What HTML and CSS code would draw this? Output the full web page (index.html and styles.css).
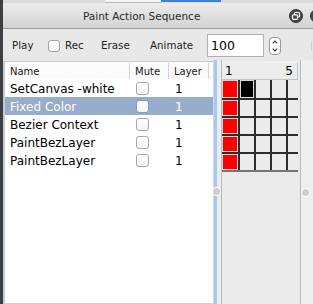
FILE: index.html
```html
<!DOCTYPE html>
<html>
<head>
<meta charset="utf-8">
<link rel="stylesheet" href="styles.css">
</head>
<body>
<div class="window">
  <div class="edge"></div>
  <div class="main">
    <div class="topstrip"><span class="ts-a"></span><span class="ts-b"></span><span class="ts-c"></span><span class="ts-d"></span></div>
    <div class="titlebar">
      <span class="title">Paint Action Sequence</span>
      <span class="tbtn restore">
        <svg width="14" height="14" viewBox="0 0 14 14"><circle cx="7" cy="7" r="6.5" fill="#4a4a4a" stroke="#333"/><rect x="5.5" y="3.5" width="5" height="4.5" rx="1" fill="none" stroke="#fff" stroke-width="1.2"/><rect x="3.5" y="5.8" width="5" height="4.5" rx="1" fill="#4a4a4a" stroke="#fff" stroke-width="1.2"/></svg>
      </span>
      <span class="tbtn close">
        <svg width="14" height="14" viewBox="0 0 14 14"><circle cx="7" cy="7" r="6.5" fill="#4a4a4a" stroke="#333"/><path d="M4.5 4.5 L9.5 9.5 M9.5 4.5 L4.5 9.5" stroke="#fff" stroke-width="1.6" stroke-linecap="round"/></svg>
      </span>
    </div>
    <div class="toolbar">
      <span class="tl w-play">Play</span>
      <span class="chk"></span>
      <span class="tl w-rec">Rec</span>
      <span class="tl w-erase">Erase</span>
      <span class="tl w-anim">Animate</span>
      <span class="field">100</span>
      <span class="stepper">
        <svg width="12" height="18" viewBox="0 0 12 18"><rect x="0.5" y="0.5" width="11" height="17" rx="3.5" fill="#fff" stroke="#9a9a9a"/><path d="M3.8 6.3 L6 4 L8.2 6.3" fill="none" stroke="#333" stroke-width="1.1"/><path d="M3.8 11.7 L6 14 L8.2 11.7" fill="none" stroke="#333" stroke-width="1.1"/></svg>
      </span>
      <span class="tick"></span>
    </div>
    <div class="content">
      <div class="tablepanel">
        <div class="thead">
          <span class="c-name">Name</span><span class="c-mute">Mute</span><span class="c-layer">Layer</span><span class="c-rest"></span>
        </div>
        <div class="row"><span class="c-name">SetCanvas -white</span><span class="c-mute"><span class="box"></span></span><span class="c-layer">1</span></div>
        <div class="row sel"><span class="c-name">Fixed Color</span><span class="c-mute"><span class="box"></span></span><span class="c-layer">1</span></div>
        <div class="row"><span class="c-name">Bezier Context</span><span class="c-mute"><span class="box"></span></span><span class="c-layer">1</span></div>
        <div class="row"><span class="c-name">PaintBezLayer</span><span class="c-mute"><span class="box"></span></span><span class="c-layer">1</span></div>
        <div class="row"><span class="c-name">PaintBezLayer</span><span class="c-mute"><span class="box"></span></span><span class="c-layer">1</span></div>
      </div>
      <div class="splitter"><span class="knob"></span></div>
      <div class="gap"></div>
      <div class="gridpanel">
        <div class="ghead"><span>1</span><span>5</span></div>
        <div class="grid">
          <span class="red"></span><span class="blk"></span><span></span><span></span><span></span>
          <span class="red"></span><span></span><span></span><span></span><span></span>
          <span class="red"></span><span></span><span></span><span></span><span></span>
          <span class="red"></span><span></span><span></span><span></span><span></span>
          <span class="red"></span><span></span><span></span><span></span><span></span>
        </div>
      </div>
      <div class="rightstrip"><span class="knob"></span></div>
    </div>
  </div>
</div>
</body>
</html>
```

FILE: styles.css
```css
html, body {
  margin: 0;
  padding: 0;
  width: 313px;
  height: 304px;
  overflow: hidden;
  background: #ececec;
  font-family: "DejaVu Sans", sans-serif;
}
.window {
  display: flex;
  width: 313px;
  height: 304px;
}
.edge {
  width: 3px;
  flex: none;
  background: #3d3f42;
}
.main {
  width: 310px;
  flex: none;
  display: flex;
  flex-direction: column;
  overflow: hidden;
}
.topstrip {
  height: 3px;
  display: flex;
  background: #dcdcdc;
}
.ts-a { width: 102px; }
.ts-b { width: 56px; background: #f4f4f4; border-bottom: 1px solid #b8b8b8; height: 2px; }
.ts-c { width: 60px; background: #3d7ee0; height: 2px; }
.ts-d { flex: 1; }
.titlebar {
  height: 25px;
  display: flex;
  align-items: center;
  background: linear-gradient(#ececec, #d2d2d2);
  border-bottom: 1px solid #9e9e9e;
}
.title {
  margin-left: 80px;
  font-size: 10.5px;
  color: #2a2a2a;
  padding-top: 1px;
}
.tbtn {
  display: flex;
  width: 14px;
  height: 14px;
}
.restore { margin-left: auto; }
.close { margin-left: 7px; margin-right: -11px; }
.toolbar {
  height: 31px;
  display: flex;
  align-items: center;
  background: #e8e8e8;
  font-size: 10.3px;
  color: #1e1e1e;
}
.tl { flex: none; padding-top: 1px; }
.w-play { margin-left: 9px; width: 36px; }
.chk {
  width: 12px;
  height: 12px;
  flex: none;
  border: 1px solid #a3a3a3;
  border-radius: 3px;
  background: linear-gradient(#ffffff, #f3f3f3);
  box-sizing: border-box;
  margin-right: 5px;
  margin-top: 2px;
}
.w-rec { width: 36px; }
.w-erase { width: 49px; }
.w-anim { width: 57px; }
.field {
  flex: none;
  width: 57px;
  height: 23px;
  box-sizing: border-box;
  border: 1px solid #b0b0b0;
  background: #fff;
  font-size: 12.5px;
  color: #000;
  padding: 3px 0 0 3px;
  margin-top: 2px;
}
.stepper {
  display: flex;
  margin-left: 5px;
  margin-top: 2px;
}
.tick {
  width: 1px;
  height: 10px;
  background: #d0d0d0;
  margin-left: 30px;
  margin-top: 2px;
}
.content {
  flex: 1;
  display: flex;
  background: #ececec;
  padding-top: 1px;
}
.tablepanel {
  width: 208px;
  flex: none;
  background: #fff;
  border-left: 2px solid #c3cbd6;
  border-top: 1px solid #c3cbd6;
  border-bottom: 1px solid #d0d0d0;
  font-size: 12px;
  color: #000;
}
.thead {
  height: 17px;
  display: flex;
  font-size: 10px;
  line-height: 17px;
  color: #202020;
  background: #fbfbfb;
}
.thead .c-name { padding-top: 1px; }
.thead .c-mute, .thead .c-layer, .thead .c-rest {
  border-left: 1px solid #d4d4d4;
  height: 15px;
  margin-top: 1px;
  line-height: 15px;
  padding-top: 1px;
}
.c-name { width: 119px; padding-left: 5px; flex: none; }
.thead .c-mute { width: 33px; padding-left: 5px; }
.thead .c-layer { width: 34px; padding-left: 5px; }
.c-rest { flex: 1; }
.row {
  height: 18px;
  display: flex;
  align-items: center;
  line-height: 18px;
}
.row .c-name { padding-top: 1px; }
.row .c-mute {
  width: 32px;
  padding-left: 7px;
  flex: none;
  display: flex;
  align-items: center;
}
.row .c-layer {
  padding-left: 7px;
  padding-top: 1px;
}
.box {
  width: 13px;
  height: 13px;
  box-sizing: border-box;
  border: 1px solid #a8a8a8;
  border-radius: 3px;
  background: linear-gradient(#ffffff, #f4f4f4);
  margin-top: 1px;
}
.sel {
  background: #98adcb;
  color: #fff;
}
.sel .box { border-color: #8a9ab2; }
.splitter {
  position: relative;
  width: 3px;
  flex: none;
  background: #a8c8ef;
  border-left: 1px solid #c9dbf2;
  margin-top: -1px;
}
.knob {
  position: absolute;
  top: 128px;
  left: -1px;
  width: 7px;
  height: 7px;
  border-radius: 50%;
  background: #cdcdcd;
  box-shadow: 0 0 0 1px #fff;
}
.gap {
  width: 4px;
  flex: none;
  background: #ececec;
}
.gridpanel {
  width: 78px;
  flex: none;
  background: #ebebeb;
  border-left: 1px solid #b9b9b9;
  border-right: 1px solid #b9b9b9;
  margin-top: -1px;
  padding-top: 2px;
}
.ghead {
  height: 18px;
  display: flex;
  justify-content: space-between;
  align-items: center;
  padding: 0 4px 0 3px;
  box-sizing: border-box;
  width: 76px;
  border-top: 1px solid #f4f4f4;
  border-right: 1px solid #c6c6c6;
  border-bottom: 1px solid #c6c6c6;
  font-size: 12px;
  color: #000;
  background: #ececec;
}
.grid {
  display: grid;
  width: 76px;
  grid-template-columns: 16px 14px 14px 14px 10px;
  grid-template-rows: 18px 16px 16px 16px 16px;
  gap: 2px;
  background: #2c2c2c;
  border-bottom: 2px solid #757575;
}
.grid span { background: #ebebeb; }
.grid .red { background: #ff0000; box-shadow: inset 0 0 0 1px #d9d9d9; }
.grid .blk { background: #000; box-shadow: inset 0 0 0 1px #d9d9d9; }
.rightstrip {
  position: relative;
  flex: 1;
  background: #efefef;
}
.rightstrip .knob { left: 1px; top: 128px; }
```
